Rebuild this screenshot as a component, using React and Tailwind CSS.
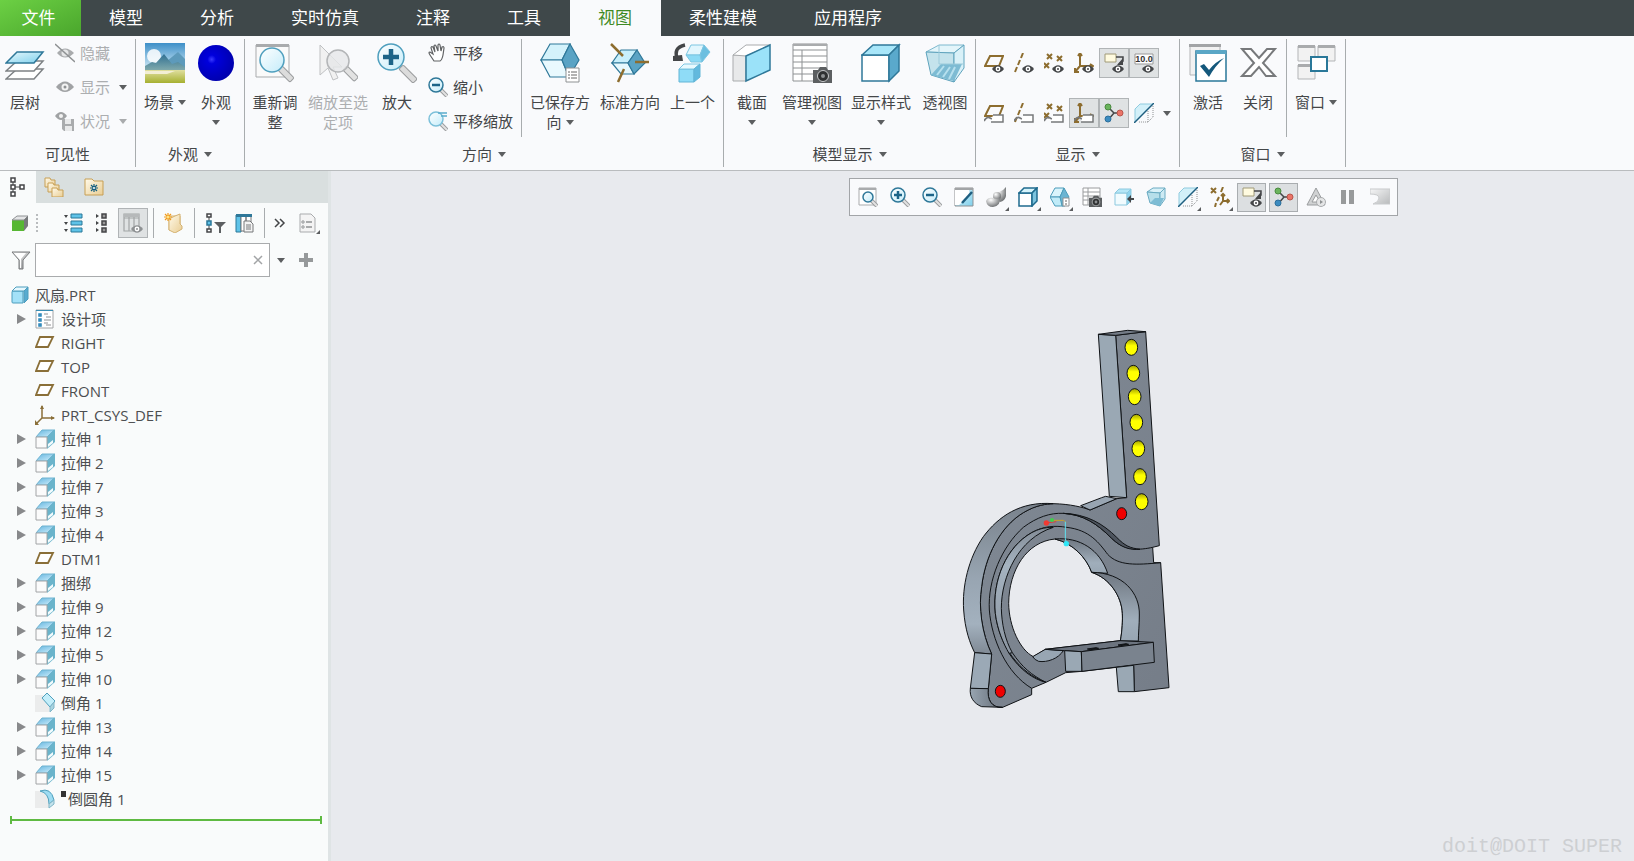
import { useState } from "react";

const INK = "#444648";
const BROWN = "#8d6d2f";
const TEAL = "#2f7899";

// Base svg wrapper, one unit per pixel
function Svg({ w = 20, h = w, children }) {
  return (
    <svg width={w} height={h} viewBox={`0 0 ${w} ${h}`} fill="none" aria-hidden="true" className="shrink-0">
      {children}
    </svg>
  );
}

function SharedDefs() {
  return (
    <svg className="absolute size-0" aria-hidden="true">
      <defs>
        <linearGradient id="lens" x1="0" y1="0" x2="1" y2="1">
          <stop offset="0" stopColor="#ffffff" />
          <stop offset="1" stopColor="#c4ecfa" />
        </linearGradient>
        <linearGradient id="blueFace" x1="0" y1="0" x2="1" y2="1">
          <stop offset="0" stopColor="#e6f8fd" />
          <stop offset="1" stopColor="#7fd0ec" />
        </linearGradient>
        <linearGradient id="skyFill" x1="0" y1="0" x2="0" y2="1">
          <stop offset="0" stopColor="#3e8fc8" />
          <stop offset="1" stopColor="#d8eef7" />
        </linearGradient>
        <linearGradient id="hillFill" x1="0" y1="0" x2="0" y2="1">
          <stop offset="0" stopColor="#2f6f92" />
          <stop offset="1" stopColor="#7fa9ac" />
        </linearGradient>
        <linearGradient id="grassFill" x1="0" y1="0" x2="0" y2="1">
          <stop offset="0" stopColor="#e0dfa0" />
          <stop offset="1" stopColor="#a6b030" />
        </linearGradient>
        <radialGradient id="ballFill" cx="0.38" cy="0.4" r="0.6">
          <stop offset="0" stopColor="#3a3aff" />
          <stop offset="0.2" stopColor="#0000dd" />
          <stop offset="1" stopColor="#0000b0" />
        </radialGradient>
        <linearGradient id="grayFill" x1="0" y1="0" x2="1" y2="1">
          <stop offset="0" stopColor="#f4f4f4" />
          <stop offset="1" stopColor="#8e9192" />
        </linearGradient>
        <radialGradient id="blobFill" cx="0.35" cy="0.3" r="0.8">
          <stop offset="0" stopColor="#ffffff" />
          <stop offset="1" stopColor="#5f6264" />
        </radialGradient>
        <linearGradient id="extrudeTop" x1="0" y1="0" x2="1" y2="1">
          <stop offset="0" stopColor="#62b4e0" />
          <stop offset="1" stopColor="#d2f0fb" />
        </linearGradient>
        <linearGradient id="folderFill" x1="0" y1="0" x2="1" y2="1">
          <stop offset="0" stopColor="#fffaea" />
          <stop offset="1" stopColor="#e9cd93" />
        </linearGradient>
      </defs>
    </svg>
  );
}

function Caret({ light }) {
  return (
    <Svg w={8} h={5}>
      <path d="M0 0h8L4 5z" fill={light ? "#a9abad" : "#5c5e60"} />
    </Svg>
  );
}

/* ---------- large ribbon icons ---------- */

function LayersIcon() {
  return (
    <Svg w={40}>
      <path d="M1 36 12 26h26L29 36z" fill="#fff" stroke="#7d8184" strokeWidth="1.5" />
      <path d="M1 28 12 18h26L29 28z" fill="#fff" stroke="#7d8184" strokeWidth="1.5" />
      <path d="M1 20 12 9h26L29 20z" fill="url(#blueFace)" stroke={TEAL} strokeWidth="1.5" />
    </Svg>
  );
}

function SceneIcon() {
  return (
    <Svg w={40}>
      <path d="M0 0h40v27H0z" fill="url(#skyFill)" />
      <circle cx="9" cy="13" r="7" fill="#fff" opacity="0.85" />
      <path d="M22 18 33 9l7 7v11H22z" fill="#5d9abb" />
      <path d="M0 23l7-4 4 1 8-9 8 10 6-2 7 5v3H0z" fill="url(#hillFill)" />
      <path d="M0 27h40v13H0z" fill="url(#grassFill)" />
      <path d="M0 28h30l-8 3H0z" fill="#f2eed4" />
    </Svg>
  );
}

function BallIcon() {
  return (
    <Svg w={40}>
      <circle cx="20" cy="20" r="18" fill="url(#ballFill)" />
    </Svg>
  );
}

function Handle({ x, y, len, muted }) {
  return (
    <g transform={`translate(${x} ${y}) rotate(45)`}>
      <rect x="0" y="-3" width={len} height="6" rx="1.5" fill={muted ? "#e2e2e2" : "#dcdcdc"} stroke="#9a9c9e" />
    </g>
  );
}

function RefitIcon() {
  return (
    <Svg w={40}>
      <path d="M1 2h33v32H1z" fill="#fafafa" stroke="#a9abad" />
      <path d="M1 1h33v3H1z" fill="#a9abad" />
      <Handle x={25} y={25} len={17} />
      <circle cx="17" cy="17" r="12" fill="url(#lens)" stroke="#4f9fbe" strokeWidth="1.5" />
    </Svg>
  );
}

function ZoomSelectedIcon() {
  return (
    <Svg w={40}>
      <path d="M2 2v30l8-7 5 12 5-2-5-11h9z" fill="#f1f1f1" stroke="#bfc1c3" />
      <Handle x={27} y={25} len={16} muted />
      <circle cx="20" cy="18" r="11" fill="#e6e7e8" fillOpacity="0.8" stroke="#b3b5b7" strokeWidth="1.5" />
    </Svg>
  );
}

function ZoomInIcon() {
  return (
    <Svg w={40}>
      <Handle x={24} y={24} len={20} />
      <circle cx="14" cy="14" r="13" fill="url(#lens)" stroke="#4f9fbe" strokeWidth="1.5" />
      <path d="M14 6v16M6 14h16" stroke="#1c6488" strokeWidth="4.5" />
    </Svg>
  );
}

function SavedViewIcon() {
  return (
    <Svg w={40}>
      <path d="M10 1h20l-8 16H1z" fill="#d4f2fb" stroke={TEAL} strokeWidth="1.2" />
      <path d="M1 17h21l7 17H10z" fill="#e9f9fe" stroke={TEAL} strokeWidth="1.2" />
      <path d="M30 1l9 16-10 17-7-17z" fill="#5aa3c4" stroke={TEAL} strokeWidth="1.2" />
      <path d="M26 25h13v14H26z" fill="#fff" stroke="#8e9193" />
      <path d="M28 29h2M31 29h6M28 32h2M31 32h6M28 35h2M31 35h6" stroke="#666" />
    </Svg>
  );
}

function StandardViewIcon() {
  return (
    <Svg w={40}>
      <path d="M11 7h16L18 20H2z" fill="#c8effb" stroke={TEAL} strokeWidth="1.2" />
      <path d="M2 20h16l6 11H11z" fill="#e6f8fd" stroke={TEAL} strokeWidth="1.2" />
      <path d="M27 7l8 13-11 11-6-11z" fill="#5aa3c4" stroke={TEAL} strokeWidth="1.2" />
      <path d="M1 1l12 12M25 19h14M14 26 8 39" stroke={BROWN} strokeWidth="2.5" />
    </Svg>
  );
}

function PreviousViewIcon() {
  return (
    <Svg w={40}>
      <path d="M12 2C3 4 2 9 4 15" stroke={INK} strokeWidth="3.5" />
      <path d="M0 13l9-1 1 6H0z" fill={INK} />
      <path d="M18 2h13l-4 10H13z" fill="#e2f6fd" stroke="#7cc6e2" />
      <path d="M13 12h14l2 7H18z" fill="#8bdaf5" stroke="#7cc6e2" />
      <path d="M31 2l6 7-8 10-2-7z" fill="#6cbfe0" stroke="#7cc6e2" />
      <path d="M6 26h15v13H6z" fill="#8fdcf7" stroke="#62b5d6" />
      <path d="M6 26l5-5h16l-6 5z" fill="#e8f9fe" stroke="#7cc6e2" />
      <path d="M27 21v13l-6 5V26z" fill="#62b9de" stroke="#62b5d6" />
    </Svg>
  );
}

function SectionIcon() {
  return (
    <Svg w={40}>
      <path d="M1 12h13v26H1z" fill="#e8e9ea" stroke="#a9abad" />
      <path d="M1 12 14 2h24L14 13z" fill="#fff" stroke="#a9abad" />
      <path d="M14 13 38 2v25L14 38z" fill="#9be2f9" stroke={TEAL} strokeWidth="1.5" />
    </Svg>
  );
}

function Camera({ x, y, s = 1 }) {
  return (
    <g transform={`translate(${x} ${y}) scale(${s})`}>
      <path d="M0 4h5l2-3h6l2 3h4v13H0z" fill="#5c5f61" />
      <circle cx="10" cy="10" r="5.5" fill="#2f3132" stroke="#c6c8ca" />
      <circle cx="10" cy="10" r="2" fill="#8d9092" />
    </g>
  );
}

function ManageViewIcon() {
  return (
    <Svg w={40}>
      <path d="M1 1h34v37H1z" fill="#fff" stroke="#8e9193" />
      <path d="M1 7h34M1 13h34M1 19h34M1 25h34M1 31h34M10 7v31" stroke="#8e9193" />
      <path d="M1 1h34v2H1z" fill="#a9abad" />
      <Camera x={21} y={23} />
    </Svg>
  );
}

function DisplayStyleIcon() {
  return (
    <Svg w={40}>
      <path d="M1 12h27v26H1z" fill="#fff" stroke={TEAL} strokeWidth="1.5" />
      <path d="M1 12 12 2h26L28 12z" fill="#a8e6f9" stroke={TEAL} strokeWidth="1.5" />
      <path d="M38 2v26L28 38V12z" fill="#5aa9cc" stroke={TEAL} strokeWidth="1.5" />
    </Svg>
  );
}

function PerspectiveIcon() {
  return (
    <Svg w={40}>
      <path d="M1 9 14 2h25l-10 8z" fill="#e3f5fa" stroke="#7db9ce" />
      <path d="M1 9l28 1v29L6 32z" fill="#c4e3ec" stroke="#5fa3bd" />
      <path d="M39 2v23L29 39V10z" fill="#d9f1f8" stroke="#5fa3bd" />
      <path d="M6 32 16 21h21l-8 17z" fill="#7dbbd3" />
      <path d="M12 32l7-9M18 34l7-10M24 36l6-12" stroke="#b6e0ee" strokeWidth="2" />
      <path d="M14 2v19M14 21h24" stroke="#9ccbdb" />
    </Svg>
  );
}

function ActivateIcon() {
  return (
    <Svg w={40}>
      <path d="M2 2h30v30H2z" fill="#f2f2f2" stroke="#b3b5b7" />
      <path d="M1 1h32v3H1z" fill="#a2a4a6" />
      <path d="M8 8h30v30H8z" fill="#fff" stroke="#2a7899" strokeWidth="1.5" />
      <path d="M8 7h30v4H8z" fill="#5ba7c6" />
      <path d="M12 23l4-2 5 6q6-8 15-12Q27 23 21 34z" fill="#14587c" />
    </Svg>
  );
}

function CloseIcon() {
  return (
    <Svg w={40}>
      <path d="M4 6h9l8 9 8-9h8L25 20l12 13h-9l-7-9-8 9H4l12-13z" fill="#fff" stroke="#77797b" strokeWidth="2" />
    </Svg>
  );
}

function WindowsIcon() {
  return (
    <Svg w={40}>
      <path d="M2 3h17v15H2zM22 3h17v15H22zM2 22h17v14H2z" fill="#f2f2f2" stroke="#b3b5b7" />
      <path d="M2 2h17v3H2zM22 2h17v3H22zM2 21h17v3H2z" fill="#a9abad" />
      <path d="M15 14h16v14H15z" fill="#fff" stroke="#2a7899" strokeWidth="2" />
    </Svg>
  );
}

/* ---------- small icons ---------- */

function Eye({ x = 14, y = 16, color = INK }) {
  return (
    <g transform={`translate(${x} ${y})`}>
      <path d="M-6 0Q0-7.5 6 0Q0 7.5-6 0z" fill={color} />
      <circle r="2.4" fill="#fff" />
      <circle r="1" fill={color} />
    </g>
  );
}

function Tag() {
  return (
    <g>
      <path d="M0 18q3-5 6-3t4 0" stroke="#77797b" strokeWidth="1.8" />
      <path d="M9 12h10v7H7" fill="#fff" stroke="#77797b" strokeWidth="1.5" />
    </g>
  );
}

const PLANE = "M6 3h13l-4 10H1z";
const AXIS = "M9 0 7 5M6 7l-2 5M3 14l-2 5";
const CROSSES = "M3 1l5 5M8 1 3 6M13 3l5 5M18 3l-5 5M0 10l5 5M5 10l-5 5";
const CSYS = "M6 0v13h13M6 13l-5 6M4 3l2-3 2 3M16 11l3 2-3 2M1 15v4h4";

function DatumIcon({ d, tag }) {
  return (
    <Svg>
      <path d={d} stroke={BROWN} strokeWidth="2" />
      {tag ? <Tag /> : <Eye />}
    </Svg>
  );
}

function AnnotationIcon() {
  return (
    <Svg>
      <path d="M1 1h11v8H1z" fill="#fffbe0" stroke="#a09a78" />
      <path d="M12 4h7v4l-4 3" stroke={INK} strokeWidth="1.5" />
      <path d="M19 5v7h-6z" fill={INK} />
      <Eye y={16} />
    </Svg>
  );
}

function DimensionIcon() {
  return (
    <Svg>
      <path d="M1 1h18v10H1z" fill="#fff" stroke="#999" />
      <text x="10" y="9" textAnchor="middle" fontSize="9" fontWeight="700" fontFamily="Liberation Sans, sans-serif" fill="#333">
        10.0
      </text>
      <Eye y={16} />
    </Svg>
  );
}

function SpinCenterIcon() {
  return (
    <Svg>
      <path d="M3 3l7 7h6M10 10l-6 7" stroke={INK} strokeWidth="1.5" />
      <circle cx="4" cy="4" r="3" fill="#6ab45c" stroke="#4a8a40" />
      <circle cx="16" cy="10" r="3" fill="#ea7468" stroke="#b9564c" />
      <circle cx="4" cy="16" r="3" fill="#3c8cc0" stroke="#2d6f9b" />
    </Svg>
  );
}

function ClipIcon() {
  return (
    <Svg>
      <path d="M1 6l5-5h13L6 14l-5 5z" fill="#d3f0f9" stroke="#8fcbdf" />
      <path d="M19 3v11l-5 5H4" stroke="#8e9193" strokeDasharray="1 1" />
      <path d="M14 8v11" stroke="#8e9193" strokeDasharray="1 1" />
      <path d="M0 20 20 0" stroke="#1f5f80" strokeWidth="1.5" />
    </Svg>
  );
}

function HideIcon() {
  return (
    <Svg>
      <path d="M2 10Q10 1 19 10Q10 19 2 10z" fill="#a9abad" />
      <circle cx="10" cy="10" r="3.5" fill="#e5e6e7" />
      <path d="M0 1l20 18" stroke="#8e9193" strokeWidth="1.5" />
    </Svg>
  );
}

function ShowIcon() {
  return (
    <Svg>
      <path d="M1 10Q10-1 19 10Q10 20 1 10z" fill="#a0a2a4" />
      <circle cx="10" cy="10" r="3.5" fill="#f2f2f2" />
      <circle cx="10" cy="10" r="1.5" fill="#8e9193" />
    </Svg>
  );
}

function StatusIcon() {
  return (
    <Svg>
      <path d="M0 5Q6-3 12 5Q6 13 0 5z" fill="#a0a2a4" />
      <circle cx="6" cy="5" r="2" fill="#f2f2f2" />
      <path d="M7 8h12v12H9l-2-2z" fill="#a9abad" />
      <path d="M10 8h6v5h-6zM10 15h7v5h-7z" fill="#e8e9ea" />
    </Svg>
  );
}

function HandIcon() {
  return (
    <Svg>
      <path
        d="M6 18 2 12q-2-3 0-3l3 2-2-6q0-2 2-1l2 5-1-6q1-2 2 0l2 5V2q1-2 2 0l1 6 1-4q2-1 2 1l-1 7q-1 5-3 6z"
        fill="#fff"
        stroke="#606264"
        strokeWidth="1.2"
      />
    </Svg>
  );
}

function SmallZoom({ sign, muted, boxed }) {
  const center = boxed ? 10 : 8;
  return (
    <Svg>
      {boxed && <path d="M1 1h17v17H1z" fill="#fff" stroke="#a9abad" />}
      {boxed && <path d="M1 1h17v2H1z" fill="#a9abad" />}
      <path d="M13 13l6 6" stroke="#9a9c9e" strokeWidth="4" />
      <path d="M13 13l6 6" stroke="#e2e2e2" strokeWidth="2" />
      <circle cx={center} cy={center} r={boxed ? 5 : 7} fill="url(#lens)" stroke={muted ? "#7cc0da" : TEAL} strokeWidth="1.5" />
      {sign && <path d="M4 8h8" stroke="#1c6488" strokeWidth="2.5" />}
      {sign === "+" && <path d="M8 4v8" stroke="#1c6488" strokeWidth="2.5" />}
      {muted && <path d="M10 2h9M13 5h6" stroke="#5aaccb" strokeWidth="1.5" />}
    </Svg>
  );
}

function RepaintIcon() {
  return (
    <Svg>
      <path d="M1 1h18v18H1z" fill="url(#blueFace)" stroke="#8e9193" />
      <path d="M1 3h14q2 5-4 10L5 18H1z" fill="#fff" />
      <path d="M18 5 8 16" stroke="#1f5f80" strokeWidth="2.5" />
      <path d="M1 1h18v2H1z" fill="#a2a4a6" />
    </Svg>
  );
}

function AppearanceIcon() {
  return (
    <Svg>
      <path d="M8 9q1-4 5-4 4-1 7-5v9q-1 5-6 6z" fill="url(#blobFill)" />
      <circle cx="11" cy="9" r="4" fill="url(#blobFill)" />
      <path d="M0 14q2-4 7-3 5 2 7-1 1 9-7 10-6 0-7-6z" fill="url(#blobFill)" />
    </Svg>
  );
}

function CubeIcon() {
  return (
    <Svg>
      <path d="M1 6h13v13H1z" fill="#fff" stroke="#1f6b8e" strokeWidth="1.5" />
      <path d="M1 6l5-5h13l-5 5z" fill="#d5f3fb" stroke="#1f6b8e" strokeWidth="1.5" />
      <path d="M19 1v13l-5 5V6z" fill="#7cc3de" stroke="#1f6b8e" strokeWidth="1.5" />
    </Svg>
  );
}

function SmallSavedView() {
  return (
    <Svg>
      <path d="M5 1h9l-4 9H0z" fill="#d9f4fc" stroke="#4c9cba" />
      <path d="M0 10h10l3 9H5z" fill="#c0ebf8" stroke="#4c9cba" />
      <path d="M14 1l5 9-4 9h-3l-2-9z" fill="#6bb4d2" stroke="#4c9cba" />
      <path d="M13 11h6v8h-6z" fill="#fff" stroke="#8e9193" />
      <path d="M15 14h2M15 17h2" stroke="#666" />
    </Svg>
  );
}

function SmallManageView() {
  return (
    <Svg>
      <path d="M1 1h17v17H1z" fill="#fff" stroke="#9a9c9e" />
      <path d="M1 5h17M1 9h17M1 13h17M6 1v17" stroke="#9a9c9e" />
      <Camera x={7} y={8} s={0.7} />
    </Svg>
  );
}

function SectionArrowIcon() {
  return (
    <Svg>
      <path d="M1 6h12v12H1z" fill="#f1fbfe" stroke="#8cc9df" />
      <path d="M1 6l4-4h12l-4 4z" fill="#b5e7f7" stroke="#8cc9df" />
      <path d="M17 2v12l-4 4V6z" fill="#8fd5ef" stroke="#8cc9df" />
      <path d="M13 12l4-4v3h3v2h-3v3z" fill={INK} />
    </Svg>
  );
}

function SmallPerspective() {
  return (
    <Svg>
      <path d="M1 5l6-4h12l-5 5z" fill="#d9f1f8" stroke="#6aabc2" />
      <path d="M1 5l13 1v13L4 16z" fill="#b7dfea" stroke="#6aabc2" />
      <path d="M19 1v11l-5 7V6z" fill="#cdeaf3" stroke="#6aabc2" />
      <path d="M4 16l5-5h9l-4 8z" fill="#7dbcd4" />
    </Svg>
  );
}

function DatumMixIcon() {
  return (
    <Svg>
      <path d="M1 1l5 5M6 1 1 6M13 0l-2 5M9 10l-2 4M6 16l-1 4M13 8v6h6M13 14l-3 4M11 9l2-2 2 2M17 12l2 2-2 2" stroke={BROWN} strokeWidth="2" />
    </Svg>
  );
}

function SimulateIcon() {
  return (
    <Svg>
      <path d="M10 1l9 17H1z" fill="#d0d2d3" stroke="#9a9c9e" />
      <path d="M10 8l4 7H6z" fill="#fff" stroke="#9a9c9e" />
      <circle cx="15" cy="15" r="4.5" fill="#e4e5e6" stroke="#a9abad" />
      <path d="M14 13l3 2-3 2z" fill="#8e9193" />
    </Svg>
  );
}

function PauseIcon() {
  return (
    <Svg>
      <path d="M3 3h5v14H3zM11 3h5v14h-5z" fill="#989a9b" />
    </Svg>
  );
}

function DeformIcon() {
  return (
    <Svg>
      <path d="M0 2h20v15H3q6-2 6-6t-9-4z" fill="url(#grayFill)" opacity="0.6" stroke="#a9abad" />
    </Svg>
  );
}

/* ---------- model tree panel icons ---------- */

function TreeTabIcon() {
  return (
    <Svg w={16} h={20}>
      <path d="M3 4v12M4 10h6" stroke={INK} />
      <path d="M1 1h4v4H1zM1 8h4v4H1zM1 15h4v4H1zM10 8h4v4h-4z" fill="#fff" stroke={INK} strokeWidth="1.5" />
    </Svg>
  );
}

function FoldersIcon() {
  return (
    <Svg>
      <g fill="url(#folderFill)" stroke="#c79f55">
        <path d="M1 1h5l1 2h4v7H1z" />
        <path d="M4 6h5l1 2h5v7H4z" />
        <path d="M8 11h5l1 2h5v7H8z" />
      </g>
    </Svg>
  );
}

function FavoritesIcon() {
  return (
    <Svg>
      <path d="M1 2h7l2 2h9v14H1z" fill="url(#folderFill)" stroke="#c79f55" />
      <path d="M10 7v8M6 11h8M7 8l6 6M13 8l-6 6" stroke="#155f80" strokeWidth="1.2" />
      <circle cx="10" cy="11" r="1" fill="#fff" />
    </Svg>
  );
}

function GreenCubeIcon() {
  return (
    <Svg w={16} h={18}>
      <path d="M0 6h12v11H0z" fill="#57b733" />
      <path d="M0 6l5-4h11l-4 4z" fill="#e4e5e6" stroke="#8e9193" />
      <path d="M16 2v10l-4 5V6z" fill="#77797b" />
    </Svg>
  );
}

function ExpandIcon() {
  return (
    <Svg>
      <path d="M8 1h11v4H8zM8 8h11v4H8zM8 15h11v4H8z" fill="#5fc3e8" stroke="#2a7899" />
      <path d="M1 2h4L3 5zM1 9h4l-2 3zM1 16h4l-2 3z" fill={INK} />
    </Svg>
  );
}

function CollapseIcon() {
  return (
    <Svg w={12} h={20}>
      <path d="M7 1h4v4H7zM7 8h4v4H7zM7 15h4v4H7z" fill="#999" stroke={INK} strokeWidth="1.5" />
      <path d="M1 1l3 2-3 2zM1 8l3 2-3 2zM1 15l3 2-3 2z" fill={INK} />
    </Svg>
  );
}

function ColumnsEyeIcon() {
  return (
    <Svg>
      <path d="M1 1h15v17H1zM6 1v17M11 1v17M1 5h15" stroke="#a2a5a6" strokeWidth="1.2" />
      <path d="M1 1h15v3H1z" fill="#b6b9ba" />
      <Eye y={16} color="#8e9193" />
    </Svg>
  );
}

function DoorIcon() {
  return (
    <Svg>
      <path d="M5 3h11v14H5z" fill="#fff3d6" stroke="#d4b272" />
      <path d="M5 6l6-3 5-2v10l2 2v3l-7 4-6-3z" fill="url(#folderFill)" stroke="#d4b272" />
      <path d="M4 0v8M0 4h8M1 1l6 6M7 1 1 7" stroke="#f09a1c" strokeWidth="1.2" />
      <circle cx="4" cy="4" r="1.5" fill="#ffe488" />
    </Svg>
  );
}

function TreeFilterIcon() {
  return (
    <Svg>
      <path d="M3 4v12" stroke={INK} />
      <path d="M1 1h4v3H1zM1 16h4v3H1z" fill="#fff" stroke={INK} strokeWidth="1.5" />
      <path d="M1 8h4v4H1z" fill="#5fc3e8" stroke="#2a7899" strokeWidth="1.5" />
      <path d="M8 9h12l-5 5v6h-2v-6z" fill="#5c5f61" />
    </Svg>
  );
}

function ColumnsPageIcon() {
  return (
    <Svg>
      <path d="M1 2h5v17H1z" fill="#5fc3e8" stroke="#2a7899" />
      <path d="M6 2h5v16H6zM11 2h5v8h-5z" fill="#fff" stroke="#77797b" />
      <path d="M1 1h16v3H1z" fill="#2f7899" />
      <path d="M9 8h6l3 3v8H9z" fill="#f4f4f4" stroke="#77797b" />
      <path d="M11 12h5M11 14h5M11 16h5" stroke="#77797b" />
    </Svg>
  );
}

function SettingsPageIcon() {
  return (
    <Svg>
      <path d="M2 1h11l4 4v14H2z" fill="#f4f4f4" stroke="#a9abad" />
      <path d="M8 9h6M8 14h6" stroke="#8e9193" strokeWidth="1.5" />
      <circle cx="5" cy="9" r="1.2" stroke="#8e9193" />
      <circle cx="5" cy="14" r="1.2" stroke="#8e9193" />
    </Svg>
  );
}

function FunnelIcon() {
  return (
    <Svg>
      <path d="M1 2h18l-7 8v9H8v-9z" fill="url(#grayFill)" stroke="#77797b" />
      <path d="M3 3h12l-5 6v9H9V10z" fill="#fff" />
    </Svg>
  );
}

function PartIcon() {
  return (
    <Svg w={18}>
      <path d="M1 6q0-1 1-1h10v12H2q-1 0-1-1z" fill="#a3e1f8" stroke="#4d9dbd" />
      <path d="M1 5l4-4h12l-4 4z" fill="#e6f8fe" stroke="#4d9dbd" />
      <path d="M17 1v12l-4 4V5z" fill="#58abd0" stroke="#4d9dbd" />
    </Svg>
  );
}

function DesignItemsIcon() {
  return (
    <Svg>
      <path d="M1 1h17v18H1z" fill="#fff" stroke="#a2a4a6" />
      <path d="M1 1h17v1H1z" fill="#3a8db2" />
      <path d="M4 5h2v2H4zM4 10h2v2H4zM4 15h2v2H4z" stroke="#2a85b8" strokeWidth="1.5" />
      <path d="M9 5h4M11 8h5M9 11h7M9 14h4M11 16h5" stroke="#8e9193" />
    </Svg>
  );
}

function PlaneIcon() {
  return (
    <Svg>
      <path d="M5 4h13l-5 10H1z" fill="#fff" stroke="#8a6f38" strokeWidth="1.8" />
    </Svg>
  );
}

function CsysIcon() {
  return (
    <Svg>
      <path d="M7 1v12h12M7 13l-6 6" stroke="#8a6f38" strokeWidth="1.5" />
      <path d="M5 4l2-4 2 4zM16 11l4 2-4 2zM0 15v5h4z" fill="#8a6f38" />
    </Svg>
  );
}

function ExtrudeIcon() {
  return (
    <Svg>
      <path d="M1 8l6-7h12l-7 7z" fill="url(#extrudeTop)" stroke="#6fb3d0" />
      <path d="M20 0v13l-8 7V8z" fill="#6ab4cb" />
      <path d="M18 11v3l-5 4v-3z" fill="#f2fbfd" />
      <path d="M1 8h11v11H1z" fill="#fbfbfb" stroke="#a2a4a6" />
    </Svg>
  );
}

function ChamferIcon() {
  return (
    <Svg>
      <path d="M0 2h8l6 10v7H0z" fill="#ebecec" />
      <path d="M7 5l5-5 8 8-5 6z" fill="#c3eefa" stroke="#4fa0bd" />
      <path d="M15 14l4-5v6l-4 4z" fill="#a7d3e0" stroke="#7fb5c7" />
    </Svg>
  );
}

function RoundIcon() {
  return (
    <Svg>
      <path d="M0 2h8q8 4 7 17H0z" fill="#ebecec" />
      <path d="M5 2q11-4 14 9l-5 4Q14 4 5 2z" fill="#9edcf2" stroke="#4fa0bd" />
      <path d="M14 15l5-4v4l-5 4z" fill="#c5e4ed" stroke="#7fb5c7" />
    </Svg>
  );
}

/* ---------- ribbon ---------- */

const tabs = ["模型", "分析", "实时仿真", "注释", "工具", "视图", "柔性建模", "应用程序"];

function TabBar() {
  const [active, setActive] = useState("视图");
  return (
    <nav className="flex h-9 bg-[#3f484a] text-[17px] leading-9 text-white">
      <button className="w-[81px] bg-linear-to-br from-[#6cd044] to-[#4aa62c] pr-1">文件</button>
      {tabs.map((tab) => (
        <button
          key={tab}
          onClick={() => setActive(tab)}
          className={`pl-7 pr-[29px] whitespace-nowrap ${active === tab ? "bg-[#f9fafc] text-[#3f8a25]" : ""}`}
        >
          {tab}
        </button>
      ))}
    </nav>
  );
}

function Divider() {
  return <div className="my-[3px] w-px shrink-0 bg-[#a8acae]" />;
}

function Group({ title, caret = true, className, children }) {
  return (
    <section className={`flex shrink-0 flex-col ${className}`}>
      <div className="flex h-[104px]">{children}</div>
      <button className="flex h-7 items-center justify-center gap-1.5 whitespace-nowrap">
        {title}
        {caret && <Caret />}
      </button>
    </section>
  );
}

// second: text of the wrapped line; caret: "inline" | "below"
function BigButton({ icon, label, second, caret, className, disabled }) {
  return (
    <button
      disabled={disabled}
      className={`flex shrink-0 flex-col items-center pt-[7px] whitespace-nowrap ${disabled ? "text-[#acaeb0]" : ""} ${className}`}
    >
      {icon}
      <span className="mt-[9px] flex items-center gap-1">
        {label}
        {caret === "inline" && <Caret />}
      </span>
      <span className="flex h-5 items-center gap-1">
        {second}
        {caret === "below" && <Caret />}
      </span>
    </button>
  );
}

function SmallButton({ icon, label, caret, disabled }) {
  return (
    <button
      disabled={disabled}
      className={`flex h-[34px] items-center gap-[5px] whitespace-nowrap ${disabled ? "text-[#acaeb0]" : ""}`}
    >
      {icon}
      {label}
      {caret && (
        <span className="ml-1">
          <Caret light={caret === "light"} />
        </span>
      )}
    </button>
  );
}

function ToggleCell({ label, pressed, children }) {
  return (
    <button
      aria-label={label}
      aria-pressed={!!pressed}
      className={`flex size-[30px] items-center justify-center border ${pressed ? "border-[#b0b4b6] bg-[#dfe2e3]" : "border-transparent"}`}
    >
      {children}
    </button>
  );
}

function Ribbon() {
  return (
    <div className="flex h-[135px] border-b border-[#b9bcbe] bg-[#f9fafc] text-[15px] leading-5">
      <Group title="可见性" caret={false} className="w-[135px]">
        <BigButton icon={<LayersIcon />} label="层树" className="w-[50px]" />
        <div className="flex flex-col pl-[5px]">
          <SmallButton icon={<HideIcon />} label="隐藏" disabled />
          <SmallButton icon={<ShowIcon />} label="显示" caret="dark" disabled />
          <SmallButton icon={<StatusIcon />} label="状况" caret="light" disabled />
        </div>
      </Group>
      <Divider />
      <Group title="外观" className="w-[108px]">
        <BigButton icon={<SceneIcon />} label="场景" caret="inline" className="w-[58px]" />
        <BigButton icon={<BallIcon />} label="外观" caret="below" className="w-11" />
      </Group>
      <Divider />
      <Group title="方向" className="w-[478px]">
        <BigButton icon={<RefitIcon />} label="重新调" second="整" className="w-[60px]" />
        <BigButton icon={<ZoomSelectedIcon />} label="缩放至选" second="定项" className="w-[66px]" disabled />
        <BigButton icon={<ZoomInIcon />} label="放大" className="w-[52px]" />
        <div className="flex w-[98px] flex-col pl-[5px]">
          <SmallButton icon={<HandIcon />} label="平移" />
          <SmallButton icon={<SmallZoom sign="-" />} label="缩小" />
          <SmallButton icon={<SmallZoom muted />} label="平移缩放" />
        </div>
        <Divider />
        <BigButton icon={<SavedViewIcon />} label="已保存方" second="向" caret="below" className="ml-[3px] w-[70px]" />
        <BigButton icon={<StandardViewIcon />} label="标准方向" className="w-[70px]" />
        <BigButton icon={<PreviousViewIcon />} label="上一个" className="w-[55px]" />
      </Group>
      <Divider />
      <Group title="模型显示" className="w-[251px]">
        <BigButton icon={<SectionIcon />} label="截面" caret="below" className="w-14" />
        <BigButton icon={<ManageViewIcon />} label="管理视图" caret="below" className="w-16" />
        <BigButton icon={<DisplayStyleIcon />} label="显示样式" caret="below" className="w-[74px]" />
        <BigButton icon={<PerspectiveIcon />} label="透视图" className="w-[54px]" />
      </Group>
      <Divider />
      <Group title="显示" className="w-[203px]">
        <div className="flex flex-col gap-5 pt-3 pl-[3px]">
          <div className="flex">
            <ToggleCell label="平面显示"><DatumIcon d={PLANE} /></ToggleCell>
            <ToggleCell label="轴显示"><DatumIcon d={AXIS} /></ToggleCell>
            <ToggleCell label="点显示"><DatumIcon d={CROSSES} /></ToggleCell>
            <ToggleCell label="坐标系显示"><DatumIcon d={CSYS} /></ToggleCell>
            <ToggleCell label="注释显示" pressed><AnnotationIcon /></ToggleCell>
            <ToggleCell label="尺寸显示" pressed><DimensionIcon /></ToggleCell>
          </div>
          <div className="flex items-center">
            <ToggleCell label="平面标记"><DatumIcon d={PLANE} tag /></ToggleCell>
            <ToggleCell label="轴标记"><DatumIcon d={AXIS} tag /></ToggleCell>
            <ToggleCell label="点标记"><DatumIcon d={CROSSES} tag /></ToggleCell>
            <ToggleCell label="坐标系标记" pressed><DatumIcon d={CSYS} tag /></ToggleCell>
            <ToggleCell label="旋转中心" pressed><SpinCenterIcon /></ToggleCell>
            <ToggleCell label="剪切显示"><ClipIcon /></ToggleCell>
            <button aria-label="更多显示" className="ml-1"><Caret /></button>
          </div>
        </div>
      </Group>
      <Divider />
      <Group title="窗口" className="w-[165px]">
        <BigButton icon={<ActivateIcon />} label="激活" className="w-14" />
        <BigButton icon={<CloseIcon />} label="关闭" className="mr-1.5 w-11" />
        <Divider />
        <BigButton icon={<WindowsIcon />} label="窗口" caret="inline" className="w-[58px]" />
      </Group>
      <Divider />
    </div>
  );
}

/* ---------- model tree ---------- */

const extrude = (name) => ({ name, icon: <ExtrudeIcon />, expandable: true });

const treeItems = [
  { name: "设计项", icon: <DesignItemsIcon />, expandable: true },
  { name: "RIGHT", icon: <PlaneIcon /> },
  { name: "TOP", icon: <PlaneIcon /> },
  { name: "FRONT", icon: <PlaneIcon /> },
  { name: "PRT_CSYS_DEF", icon: <CsysIcon /> },
  extrude("拉伸 1"),
  extrude("拉伸 2"),
  extrude("拉伸 7"),
  extrude("拉伸 3"),
  extrude("拉伸 4"),
  { name: "DTM1", icon: <PlaneIcon /> },
  extrude("捆绑"),
  extrude("拉伸 9"),
  extrude("拉伸 12"),
  extrude("拉伸 5"),
  extrude("拉伸 10"),
  { name: "倒角 1", icon: <ChamferIcon /> },
  extrude("拉伸 13"),
  extrude("拉伸 14"),
  extrude("拉伸 15"),
  { name: "倒圆角 1", icon: <RoundIcon />, marked: true },
];

function Corner() {
  return (
    <span className="absolute right-0 bottom-0">
      <Svg w={4}>
        <path d="M4 0v4H0z" fill="#5c5e60" />
      </Svg>
    </span>
  );
}

function PanelSeparator() {
  return <div className="h-[30px] w-px bg-[#a8acae]" />;
}

function ModelTree() {
  const [filter, setFilter] = useState("");
  return (
    <aside className="w-[331px] shrink-0 border-r-[3px] border-[#dfe4e5] bg-[#f9fbfb] text-[15px] text-[#4c4e50]">
      <div className="flex h-8 items-center bg-[#d9dfdf]">
        <button aria-label="模型树" className="flex h-8 w-9 items-center justify-center bg-[#f9fbfb]"><TreeTabIcon /></button>
        <button aria-label="文件夹浏览器" className="ml-2"><FoldersIcon /></button>
        <button aria-label="收藏夹" className="ml-5"><FavoritesIcon /></button>
      </div>

      {/* Tree toolbar */}
      <div className="flex h-10 items-center pl-3">
        <button aria-label="模型"><GreenCubeIcon /></button>
        <span className="ml-2 h-[18px] border-l-2 border-dotted border-[#b9bcbe]" />
        <button aria-label="全部展开" className="ml-[25px]"><ExpandIcon /></button>
        <button aria-label="全部折叠" className="ml-3"><CollapseIcon /></button>
        <button aria-label="显示列" aria-pressed="true" className="mr-[5px] ml-[11px] flex size-[30px] items-center justify-center border border-[#b0b4b6] bg-[#dfe2e3]">
          <ColumnsEyeIcon />
        </button>
        <PanelSeparator />
        <button aria-label="打开" className="mx-[10px]"><DoorIcon /></button>
        <PanelSeparator />
        <button aria-label="树过滤器" className="ml-[11px]"><TreeFilterIcon /></button>
        <button aria-label="树列" className="mx-[9px]"><ColumnsPageIcon /></button>
        <PanelSeparator />
        <button aria-label="更多" className="ml-[9px]">
          <Svg w={12} h={10}>
            <path d="M1 1l4 4-4 4M6 1l4 4-4 4" stroke={INK} strokeWidth="1.5" />
          </Svg>
        </button>
        <button aria-label="设置" className="relative ml-3 pb-px pr-0.5"><SettingsPageIcon /><Corner /></button>
      </div>

      {/* Filter */}
      <div className="flex h-[34px] items-center pl-[11px]">
        <FunnelIcon />
        <div className="ml-1 flex h-[34px] w-[235px] items-center border border-[#a9abad] bg-white pr-0.5">
          <input
            aria-label="过滤"
            value={filter}
            onChange={(e) => setFilter(e.target.value)}
            className="min-w-0 flex-1 px-2 outline-none"
          />
          <button aria-label="清除" onClick={() => setFilter("")} className="p-1">
            <Svg w={10}>
              <path d="M1 1l8 8M9 1 1 9" stroke="#a2a4a6" strokeWidth="1.5" />
            </Svg>
          </button>
        </div>
        <button aria-label="过滤选项" className="ml-[7px]"><Caret /></button>
        <button aria-label="添加" className="ml-[14px]">
          <Svg w={14}>
            <path d="M7 0v14M0 7h14" stroke="#96999a" strokeWidth="4" />
          </Svg>
        </button>
      </div>

      <div className="mt-1.5 flex h-6 items-center gap-1.5 pl-[11px] leading-6">
        <PartIcon />
        风扇.PRT
      </div>
      <ul className="leading-6">
        {treeItems.map((item) => (
          <li key={item.name} className="flex h-6 items-center pl-[17px]">
            <span className="w-[18px]">
              {item.expandable && (
                <button aria-label={`展开 ${item.name}`} className="block">
                  <Svg w={9} h={10}>
                    <path d="M0 0l9 5-9 5z" fill="#88898b" />
                  </Svg>
                </button>
              )}
            </span>
            {item.icon}
            {item.marked && <span className="mb-2.5 ml-1.5 h-1.5 w-[5px] bg-[#333]" />}
            <span className={item.marked ? "ml-0.5" : "ml-1.5"}>{item.name}</span>
          </li>
        ))}
      </ul>
      <div className="mt-[5px] mr-1.5 ml-[10px] flex h-2 items-center border-x-2 border-[#5fba42]">
        <div className="h-0.5 flex-1 bg-[#5fba42]" />
      </div>
    </aside>
  );
}

/* ---------- graphics area ---------- */

const viewTools = [
  { label: "重新调整", icon: <SmallZoom boxed /> },
  { label: "放大", icon: <SmallZoom sign="+" /> },
  { label: "缩小", icon: <SmallZoom sign="-" /> },
  { label: "重画", icon: <RepaintIcon /> },
  { label: "渲染选项", icon: <AppearanceIcon />, menu: true },
  { label: "显示样式", icon: <CubeIcon />, menu: true },
  { label: "已保存方向", icon: <SmallSavedView />, menu: true },
  { label: "视图管理器", icon: <SmallManageView /> },
  { label: "截面", icon: <SectionArrowIcon /> },
  { label: "透视图", icon: <SmallPerspective /> },
  { label: "剪切显示", icon: <ClipIcon />, menu: true },
  { label: "基准显示过滤器", icon: <DatumMixIcon />, menu: true },
  { label: "注释显示", icon: <AnnotationIcon />, pressed: true },
  { label: "旋转中心", icon: <SpinCenterIcon />, pressed: true },
  { label: "仿真", icon: <SimulateIcon /> },
  { label: "暂停", icon: <PauseIcon /> },
  { label: "变形", icon: <DeformIcon /> },
];

function ViewToolbar() {
  return (
    <div className="absolute top-[7px] left-[518px] flex h-[38px] items-center gap-[3px] border border-[#a2a5a8] bg-[#f9fafc] px-[3px]">
      {viewTools.map((tool) => (
        <button
          key={tool.label}
          aria-label={tool.label}
          className={`relative flex size-[29px] items-center justify-center border ${tool.pressed ? "border-[#a9adb0] bg-[#dcdfe1]" : "border-transparent"}`}
        >
          {tool.icon}
          {tool.menu && <Corner />}
        </button>
      ))}
    </div>
  );
}

const holes = [
  [574, 82],
  [580, 160],
  [584, 230],
  [589, 307],
  [595, 386],
  [600, 470],
  [605, 545],
];

function FanBracket() {
  return (
    <svg
      className="absolute top-[149px] left-[609px]"
      width="260"
      height="400"
      viewBox="0 0 780 1200"
      role="img"
      aria-label="风扇"
      stroke="#101316"
      strokeWidth="3"
      strokeLinejoin="round"
    >
      <defs>
        <linearGradient id="front" x1="0" y1="0" x2="1" y2="1">
          <stop offset="0" stopColor="#828b96" />
          <stop offset="1" stopColor="#757d88" />
        </linearGradient>
        <linearGradient id="rim" x1="0" y1="0" x2="0" y2="1">
          <stop offset="0" stopColor="#79828c" />
          <stop offset="0.5" stopColor="#98a5b2" />
          <stop offset="0.8" stopColor="#a3b1be" />
          <stop offset="1" stopColor="#7f8994" />
        </linearGradient>
        <linearGradient id="bore" x1="0" y1="0" x2="0" y2="1">
          <stop offset="0" stopColor="#6f7781" />
          <stop offset="0.7" stopColor="#a0aebb" />
          <stop offset="1" stopColor="#98a6b3" />
        </linearGradient>
        <linearGradient id="chamfer" x1="0" y1="0" x2="0" y2="1">
          <stop offset="0" stopColor="#828b96" />
          <stop offset="0.3" stopColor="#a5b3c0" />
          <stop offset="1" stopColor="#8b95a1" />
        </linearGradient>
        <linearGradient id="lug" x1="0" y1="0" x2="1" y2="0">
          <stop offset="0" stopColor="#98a5b1" />
          <stop offset="1" stopColor="#656d77" />
        </linearGradient>
        <linearGradient id="hole" x1="0" y1="0" x2="0" y2="1">
          <stop offset="0" stopColor="#a5a500" />
          <stop offset="0.4" stopColor="#ffff00" />
          <stop offset="1" stopColor="#ffff00" />
        </linearGradient>
      </defs>

      {/* Front faces with the bore cut out */}
      <path
        fillRule="evenodd"
        fill="url(#front)"
        d="M527 46 617 35 658 677 638 682 641 728 662 728 687 1103 583 1115 581 1036 426 1054 377 1058 318 1087 275 1105 275 1124 188 1162C155 1164 141 1140 145 1106L155 1002C125 940 115 860 125 800C135 710 180 620 250 578C290 554 320 552 340 551C390 552 430 562 450 570L530 536 560 533ZM345 657C260 665 207 750 206 850C207 920 240 990 280 1010L316 988 541 962C547 930 548 900 547 880C545 830 510 775 455 757C440 715 400 670 345 657Z"
      />

      {/* Upper post */}
      <path d="M475 43 527 46 560 533 508 529Z" fill="#9aa8b4" />
      <path d="M475 43 563 31 617 35 527 46Z" fill="#737b86" />
      <path d="M422 557 485 533 497 529 530 536 450 570Z" fill="#98a5b2" />

      {/* Outer rim */}
      <path
        d="M340 551C240 543 175 590 130 650C85 715 66 800 71 870C75 930 90 970 104 998L155 1002C125 940 115 860 125 800C135 710 180 620 250 578C290 554 320 552 340 551Z"
        fill="url(#rim)"
      />
      <path d="M104 998 155 1002 145 1106 91 1105Z" fill="#9ba9b6" />
      <path d="M91 1105 145 1106C141 1140 155 1164 188 1162L125 1160C100 1150 88 1130 91 1105Z" fill="url(#lug)" />

      {/* Groove steps */}
      <path
        d="M275 1105C200 1060 155 960 148 870C143 780 185 680 250 622C290 592 330 578 370 580C430 584 470 610 515 655C555 695 600 690 638 682"
        fill="none"
      />
      <path d="M370 580C440 582 490 612 530 652C555 678 570 684 600 688C570 690 545 684 515 655C470 610 430 584 370 580Z" fill="#4d545e" />
      <path
        d="M318 1087C240 1060 178 980 166 880C156 780 200 680 275 638C310 618 345 616 380 622C450 630 478 670 503 703C535 738 590 735 662 728"
        fill="none"
      />
      <path
        d="M340 622C310 622 295 628 275 638C200 680 156 780 166 880C172 930 190 970 207 1000L217 998C195 960 185 910 184 865C184 770 235 655 340 622Z"
        fill="url(#chamfer)"
      />
      <path d="M207 1000C240 1050 280 1078 318 1087M217 998C245 1040 275 1066 318 1087" fill="none" />

      {/* Bore walls */}
      <path d="M345 657C420 650 480 690 503 760L455 757C440 715 400 670 345 657Z" fill="url(#bore)" />
      <path
        d="M455 757C550 758 600 820 598 885C598 915 595 940 595 963L541 963C547 930 548 900 547 880C545 830 510 775 455 757Z"
        fill="url(#bore)"
      />
      <path d="M278 1010 316 988 370 992C355 1016 322 1028 296 1024Q284 1020 278 1010Z" fill="#98a6b3" />

      {/* Lower bar and foot */}
      <path d="M316 988 540 962 640 967 424 995 374 992Z" fill="#6c747f" />
      <path d="M442 987l26-4 8 2-24 4zM534 975l24-4 8 2-24 4z" fill="#101316" />
      <path d="M374 992 424 995 426 1054 377 1054Z" fill="#9aa8b4" />
      <path d="M424 995 640 967 643 1027 426 1054Z" fill="#7a838e" />
      <path d="M529 1042 581 1036 583 1115 535 1115Z" fill="#9aa8b4" />

      {holes.map(([cx, cy]) => (
        <ellipse key={cy} cx={cx} cy={cy} rx="19" ry="24" fill="url(#hole)" />
      ))}
      <ellipse cx="545" cy="581" rx="15" ry="18" fill="#f00000" />
      <ellipse cx="181" cy="1114" rx="15" ry="18" fill="#f00000" />

      {/* Spin center */}
      <g strokeWidth="3">
        <path d="M335 601h36l6 6" stroke="#c9a227" fill="none" />
        <path d="M319 609l30-4" stroke="#e03a3a" />
        <path d="M376 605v50l3 14" stroke="#5fe3f2" fill="none" />
      </g>
      <g stroke="none">
        <circle cx="319" cy="609" r="8" fill="#f23a32" />
        <circle cx="336" cy="600" r="6" fill="#3fd04c" />
        <circle cx="379" cy="671" r="8" fill="#2fe6f6" />
      </g>
    </svg>
  );
}

export default function App() {
  return (
    <div className="flex min-h-screen flex-col bg-[#e8eaee] font-['Open_Sans','Noto_Sans_CJK_SC',sans-serif] text-[#444648]">
      <SharedDefs />
      <header>
        <TabBar />
        <Ribbon />
      </header>
      <div className="flex flex-1">
        <ModelTree />
        <main className="relative flex-1 overflow-hidden">
          <ViewToolbar />
          <FanBracket />
          <p className="absolute right-3 bottom-0.5 font-['Liberation_Mono',monospace] text-[20px] leading-6 text-[#cdcfd2]">
            doit@DOIT SUPER
          </p>
        </main>
      </div>
    </div>
  );
}
